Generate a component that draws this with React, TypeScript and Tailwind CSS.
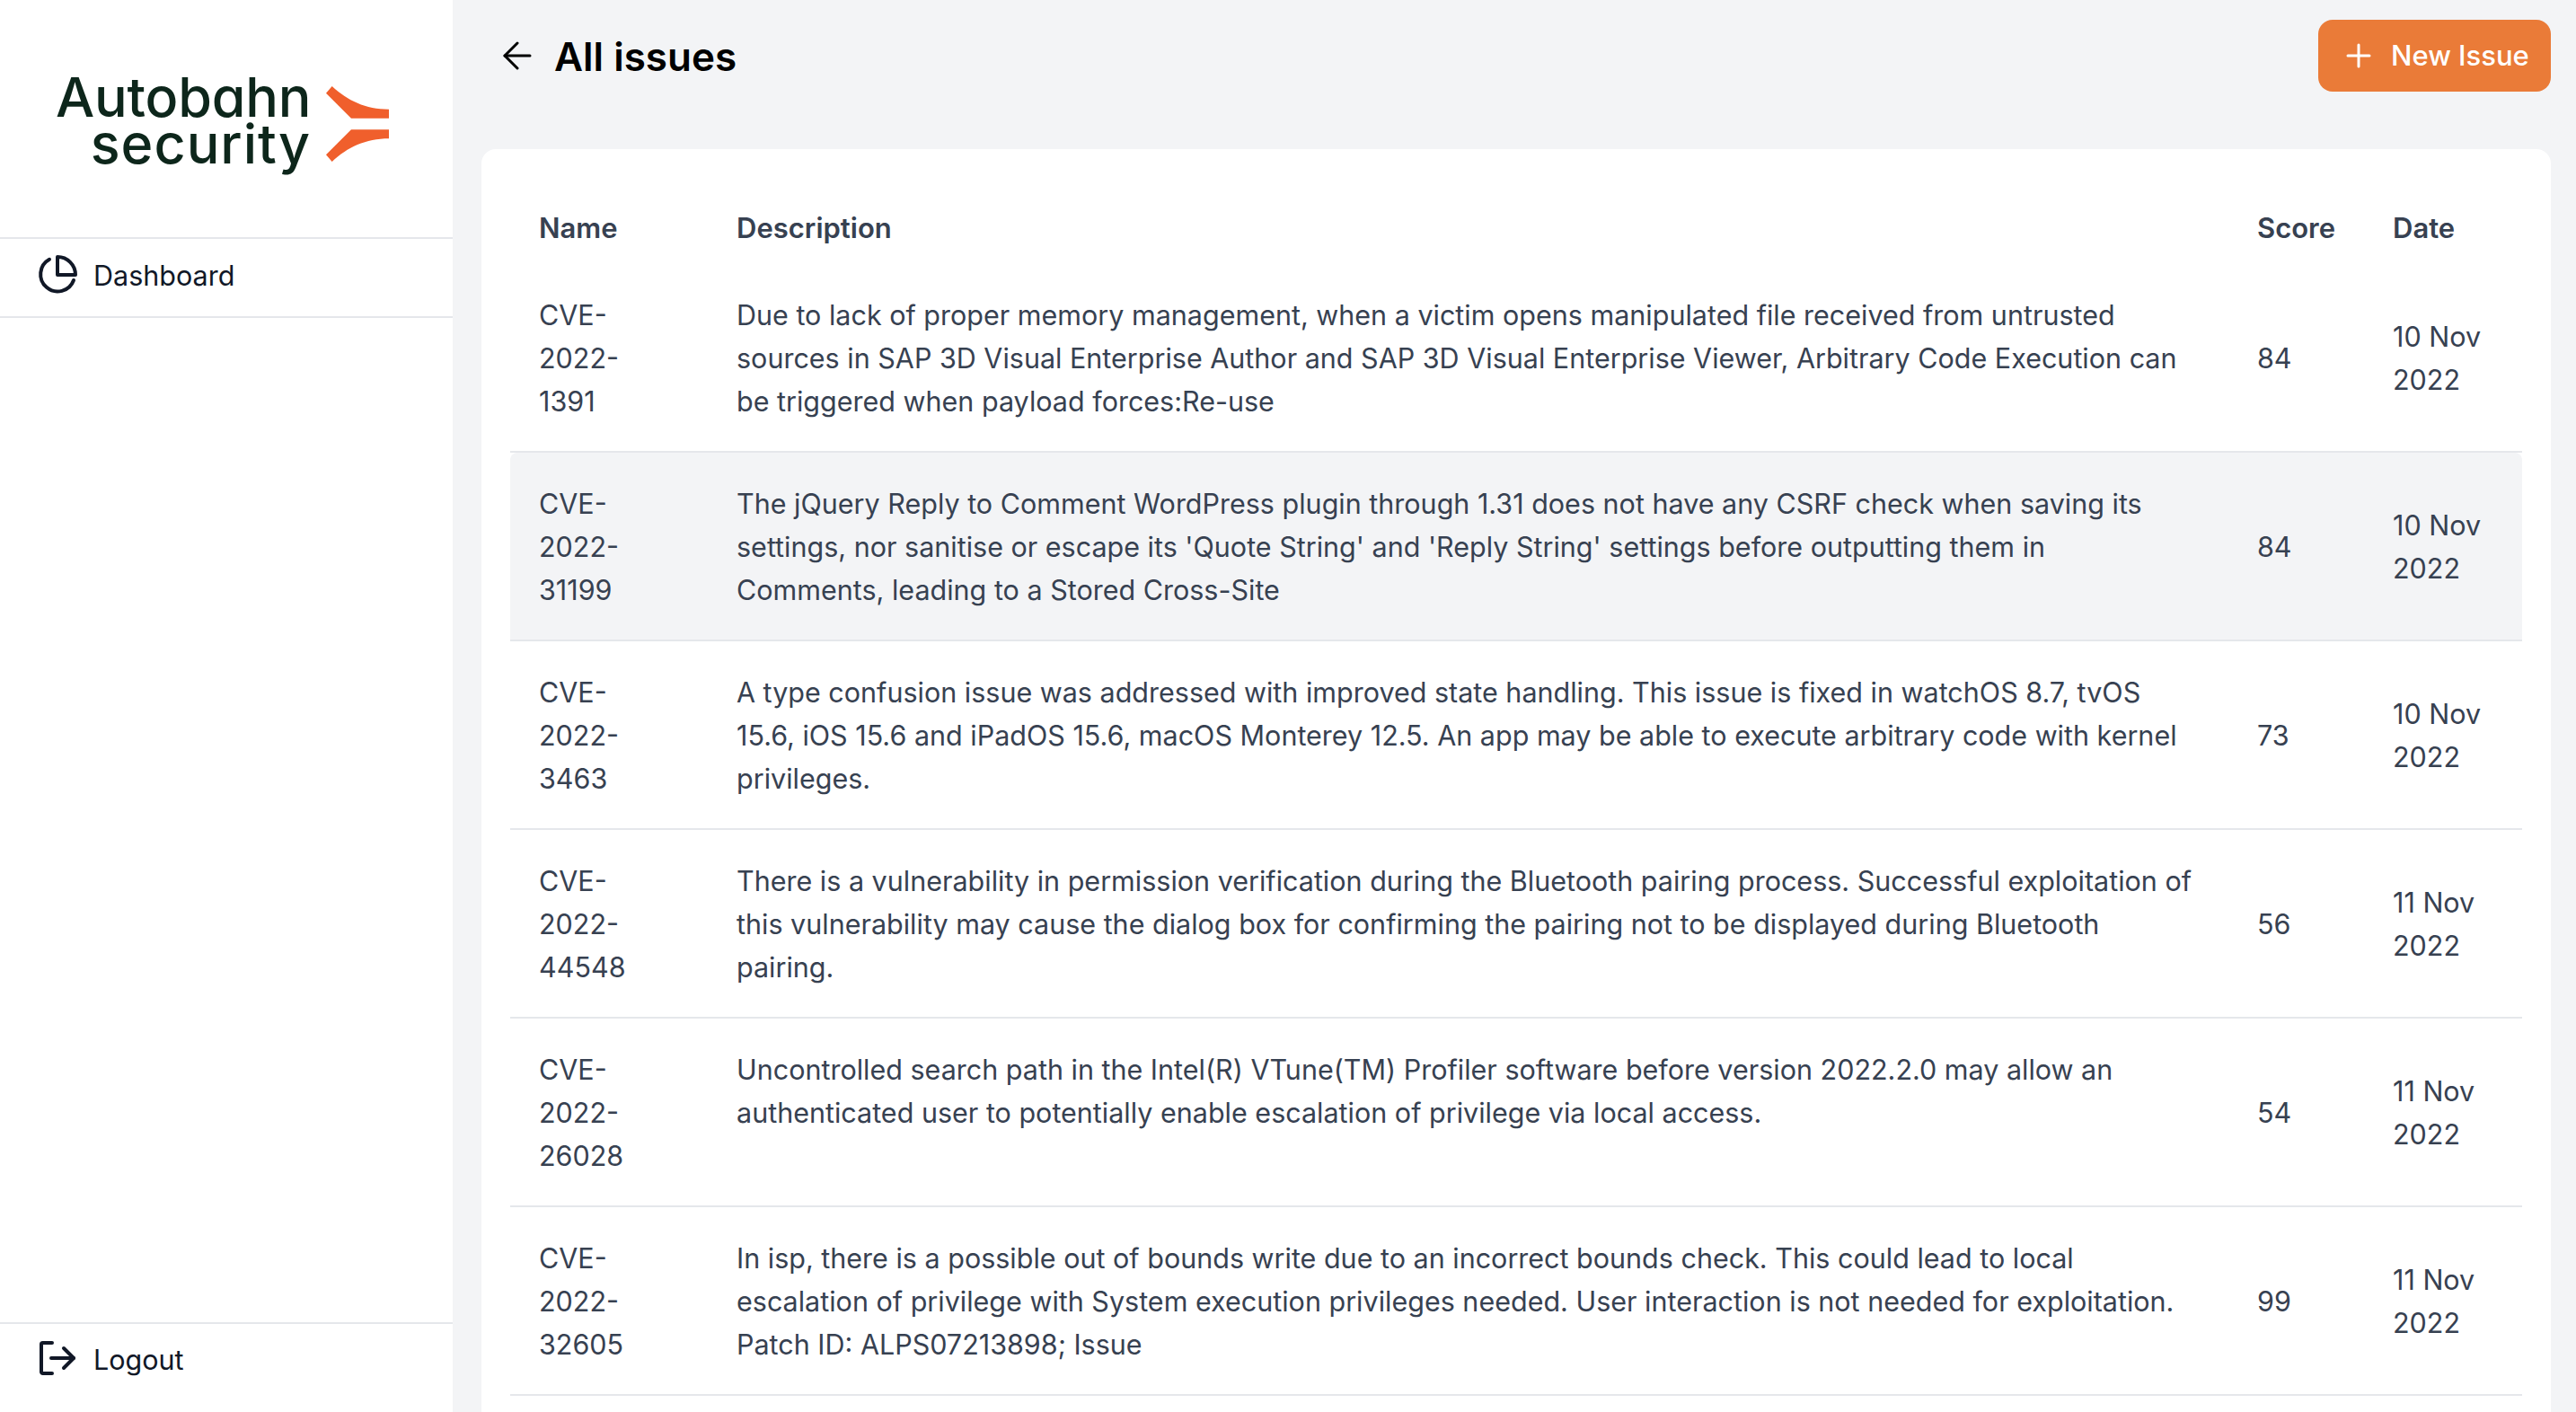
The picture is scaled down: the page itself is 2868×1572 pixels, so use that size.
const issues = [
  {
    name: 'CVE-2022-1391',
    description:
      'Due to lack of proper memory management, when a victim opens manipulated file received from untrusted sources in SAP 3D Visual Enterprise Author and SAP 3D Visual Enterprise Viewer, Arbitrary Code Execution can be triggered when payload forces:Re-use',
    score: 84,
    date: '10 Nov 2022',
  },
  {
    name: 'CVE-2022-31199',
    description:
      "The jQuery Reply to Comment WordPress plugin through 1.31 does not have any CSRF check when saving its settings, nor sanitise or escape its 'Quote String' and 'Reply String' settings before outputting them in Comments, leading to a Stored Cross-Site",
    score: 84,
    date: '10 Nov 2022',
  },
  {
    name: 'CVE-2022-3463',
    description:
      'A type confusion issue was addressed with improved state handling. This issue is fixed in watchOS 8.7, tvOS 15.6, iOS 15.6 and iPadOS 15.6, macOS Monterey 12.5. An app may be able to execute arbitrary code with kernel privileges.',
    score: 73,
    date: '10 Nov 2022',
  },
  {
    name: 'CVE-2022-44548',
    description:
      'There is a vulnerability in permission verification during the Bluetooth pairing process. Successful exploitation of this vulnerability may cause the dialog box for confirming the pairing not to be displayed during Bluetooth pairing.',
    score: 56,
    date: '11 Nov 2022',
  },
  {
    name: 'CVE-2022-26028',
    description:
      'Uncontrolled search path in the Intel(R) VTune(TM) Profiler software before version 2022.2.0 may allow an authenticated user to potentially enable escalation of privilege via local access.',
    score: 54,
    date: '11 Nov 2022',
  },
  {
    name: 'CVE-2022-32605',
    description:
      'In isp, there is a possible out of bounds write due to an incorrect bounds check. This could lead to local escalation of privilege with System execution privileges needed. User interaction is not needed for exploitation. Patch ID: ALPS07213898; Issue',
    score: 99,
    date: '11 Nov 2022',
  },
];

const Logo = () => (
  <div className="flex h-[264px] items-start gap-[17px] pl-[62px] pt-[82px]">
    <div className="text-right text-[61px] font-[450] leading-[52px] text-[#0d261b] [font-feature-settings:'cv11']">
      <div className="tracking-[-0.2px]">Autobahn</div>
      <div className="tracking-[1px]">security</div>
    </div>
    <svg width="70" height="84" viewBox="1088 167 210 252" className="mt-[14px]">
      <path d="M1088 190 L1108 167 C1160 215 1220 244 1298 244 L1298 274 L1172 274 Z" fill="#f05f2c" />
      <path d="M1088 396 L1108 419 C1160 371 1220 342 1298 342 L1298 312 L1172 312 Z" fill="#f05f2c" />
    </svg>
  </div>
);

const Sidebar = () => (
  <aside className="flex w-[504px] shrink-0 flex-col bg-white text-[30.5px] text-[#111827]">
    <Logo />
    <div className="flex h-[90px] items-center gap-[16px] border-y-2 border-[#e5e7eb] pb-[4px] pl-[40px]">
      <svg width="48" height="48" viewBox="0 0 24 24" fill="none" stroke="#111827" strokeWidth="2" strokeLinecap="round" strokeLinejoin="round">
        <path d="M7.5 2.9A9.5 9.5 0 1 0 21 14.5" />
        <path d="M12 1.5A10 10 0 0 1 22 11.5H12V1.5Z" />
      </svg>
      <span>Dashboard</span>
    </div>
    <div className="mb-[18px] mt-auto flex h-[82px] items-center gap-[16px] border-t-2 border-[#e5e7eb] pl-[40px]">
      <svg width="48" height="48" viewBox="0 0 24 24" fill="none" stroke="#111827" strokeWidth="2" strokeLinecap="round" strokeLinejoin="round">
        <path d="M9 2.5H3.8a.8.8 0 0 0-.8.8v15.4c0 .4.4.8.8.8H9" />
        <path d="M8.5 11H21" />
        <path d="M15.5 5.5l5.5 5.5-5.5 5.5" />
      </svg>
      <span>Logout</span>
    </div>
  </aside>
);

const IssuesTable = () => (
  <table className="w-full table-fixed border-separate border-spacing-0 text-left text-[30.5px] leading-[48px] text-[#374151]">
    <thead>
      <tr className="h-[80px] text-[31px]">
        <th className="w-[220px] px-8 font-semibold">Name</th>
        <th className="px-8 font-semibold">Description</th>
        <th className="w-[151px] px-8 font-semibold">Score</th>
        <th className="w-[176px] px-8 font-semibold">Date</th>
      </tr>
    </thead>
    <tbody>
      {issues.map((issue, i) => {
        const striped = i === 1;
        const bg = striped ? 'bg-[#f3f4f6]' : '';
        return (
          <tr key={issue.name}>
            <td className={`h-[210px] border-b-2 border-[#e5e7eb] pb-[31px] pl-8 pr-[60px] pt-[33px] align-top ${bg} ${striped ? 'rounded-tl-lg' : ''}`}>
              {issue.name}
            </td>
            <td className={`border-b-2 border-[#e5e7eb] px-8 pb-[31px] pt-[33px] align-top ${bg}`}>{issue.description}</td>
            <td className={`border-b-2 border-[#e5e7eb] px-8 pb-[31px] pt-[33px] ${bg}`}>{issue.score}</td>
            <td className={`border-b-2 border-[#e5e7eb] px-8 pb-[31px] pt-[33px] ${bg} ${striped ? 'rounded-tr-lg' : ''}`}>
              {issue.date}
            </td>
          </tr>
        );
      })}
    </tbody>
  </table>
);

export default function App() {
  return (
    <div className="flex h-[1572px] overflow-hidden bg-[#f3f4f6] font-['Inter',sans-serif] [font-optical-sizing:none]">
      <Sidebar />
      <main className="min-w-0 flex-1 pl-8 pr-7 pt-[22px]">
        <header className="mb-[64px] flex h-[80px] items-center justify-between pl-6">
          <div className="flex items-center gap-[25px]">
            <svg width="32" height="32" viewBox="0 0 32 32" fill="none" stroke="#000" strokeWidth="3" strokeLinecap="round" strokeLinejoin="round">
              <path d="M30 16H2" />
              <path d="M16 2L2 16l14 14" />
            </svg>
            <h1 className="mt-[2px] text-[44px] font-semibold leading-none text-black">All issues</h1>
          </div>
          <button className="flex h-[80px] w-[259px] items-center gap-[22px] rounded-2xl bg-[#ea7b38] pl-[31px] text-[31px] font-medium text-white">
            <svg width="28" height="28" viewBox="0 0 28 28" fill="none" stroke="#fff" strokeWidth="3" strokeLinecap="round">
              <path d="M14 2v24M2 14h24" />
            </svg>
            New Issue
          </button>
        </header>
        <section className="min-h-[1500px] rounded-2xl bg-white px-8 pt-[48px]">
          <IssuesTable />
        </section>
      </main>
    </div>
  );
}
